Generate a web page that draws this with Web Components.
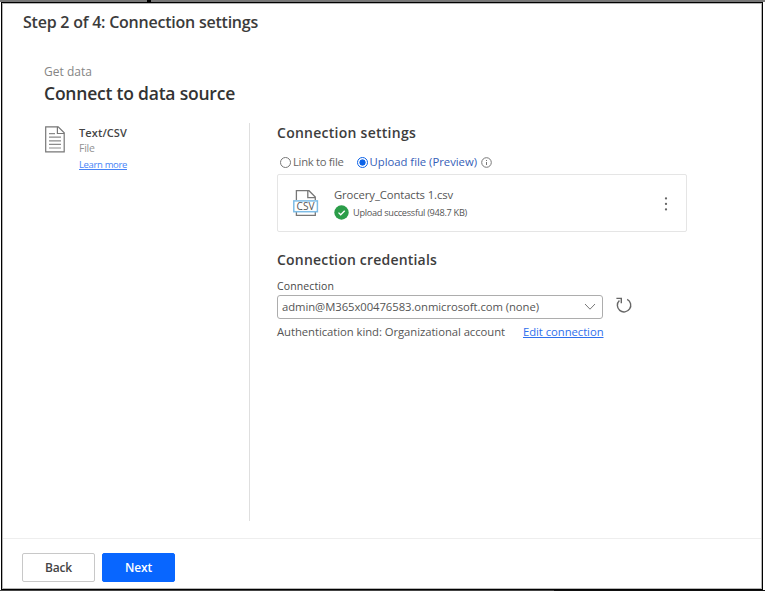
<!DOCTYPE html>
<html lang="en"><head><meta charset="utf-8"><title>Connection settings</title>
<style>
html,body{margin:0;width:765px;height:591px;overflow:hidden;background:#fff;font-family:"Open Sans","Noto Sans",sans-serif;color:#333}
</style></head><body>
<wizard-page></wizard-page>
<script>
// A single line of text, tracked so that it occupies the width given in "w".
customElements.define('text-line', class extends HTMLElement{
  constructor(){super();this.attachShadow({mode:'open'}).innerHTML='<style>:host{display:block;white-space:nowrap;line-height:1;width:max-content}span{display:inline-block}:host([link]) span{text-decoration:underline;text-decoration-thickness:1px;text-underline-offset:1px}</style><span><slot></slot></span>';}
  connectedCallback(){
    const s=this.shadowRoot.querySelector('span'),w=+this.getAttribute('w');
    if(!w)return;
    const n=this.textContent.length,d=(w-s.getBoundingClientRect().width)/n;
    s.style.letterSpacing=d.toFixed(3)+'px';
  }
});
function define(name,html){
  customElements.define(name,class extends HTMLElement{
    constructor(){super();const t=document.createElement('template');t.innerHTML=html;this.attachShadow({mode:'open'}).append(document.importNode(t.content,true));}
  });
}
define('file-icon',`<style>:host{display:block;width:20px;height:27px}svg{display:block}</style>
<svg width="20" height="27" viewBox="0 0 20 27" fill="none" stroke="#777" stroke-width="1.2"><path d="M.7.8H13.2L19.2 6.8V25.8H.7Z"/><path d="M12.4.8V7.5H19.2"/><path d="M4 7.6H10M4 11.2H16M4 14.8H16M4 18.4H16M4 22H16" stroke="#8b8b8b"/></svg>`);
define('csv-icon',`<style>:host{display:block;width:26px;height:28px}svg{display:block;font:10.5px "Open Sans",sans-serif}</style>
<svg width="26" height="28" viewBox="0 0 26 28"><path d="M3.4 11V1.7H16L22.3 8V11M14.8 1.7V8.7H22.3M3.4 23V26.4H22.3V23" fill="none" stroke="#777" stroke-width="1.3"/><rect x="0.8" y="11.9" width="23.6" height="10.8" fill="#fff" stroke="#7dbce6" stroke-width="1.5"/><text x="12.6" y="21.1" text-anchor="middle" fill="#555" textLength="18" lengthAdjust="spacingAndGlyphs">CSV</text></svg>`);
define('radio-option',`<style>:host{display:flex;align-items:center;height:14px;font-size:11.3px;color:#666}
i{box-sizing:border-box;width:11px;height:11px;border:1px solid #777;border-radius:50%;margin-right:2px;flex:none}
:host([checked]){color:#3560b8}:host([checked]) i{border-color:#0b62e8;background:radial-gradient(circle,#0b62e8 0 2.8px,#fff 3.4px)}</style><i></i><slot></slot>`);
define('push-button',`<style>:host{box-sizing:border-box;width:73px;height:29px;display:flex;align-items:center;justify-content:center;border:1.5px solid #c8c8c8;border-radius:2px;font-size:12px;font-weight:600;color:#444;background:#fff}
:host([primary]){background:#0866ff;border-color:#0866ff;color:#fff}</style><slot></slot>`);
define('source-panel',`<style>:host{box-sizing:border-box;display:flex;width:206px;height:398px;border-right:1px solid #dfdfdf;padding-top:4px}
file-icon{margin:-1px 14px 0 1px}text-line{height:16px;font-size:10px}</style>
<file-icon></file-icon><div><text-line w="48" style="font-size:11px;font-weight:600;color:#444">Text/CSV</text-line>
<text-line w="15.5" style="color:#929292;font-size:10.5px">File</text-line><text-line link w="48" style="color:#4684f7;font-size:9.5px;margin-top:1px">Learn more</text-line></div>`);
define('file-card',`<style>:host{box-sizing:border-box;display:flex;width:410px;height:58px;border:1.5px solid #e5e5e5;border-radius:2px;padding:14px 17px 0 15px}
csv-icon{margin-right:15px}.info{flex:1}.row{display:flex;align-items:center;gap:4px;height:15px;margin-top:4px}.row text-line{font-size:9.2px;color:#555}.menu{margin:6.5px 0 0}svg{display:block}</style>
<csv-icon></csv-icon><div class="info"><text-line w="119" style="font-size:11.3px;color:#555;height:12px;line-height:11px">Grocery_Contacts 1.csv</text-line>
<div class="row"><svg width="15" height="15" viewBox="0 0 15 15"><circle cx="7.5" cy="7.5" r="7.2" fill="#2b9d49"/><path d="M4.5 7.6 6.7 9.8 10.7 5.8" fill="none" stroke="#fff" stroke-width="1.3"/></svg><text-line w="114">Upload successful (948.7 KB)</text-line></div></div>
<svg class="menu" width="6" height="16" fill="#666"><circle cx="3" cy="2.4" r="1.15"/><circle cx="3" cy="7.9" r="1.15"/><circle cx="3" cy="13.4" r="1.15"/></svg>`);
define('select-box',`<style>:host{box-sizing:border-box;width:326px;height:24px;border:1.3px solid #adadad;border-radius:3px;display:flex;align-items:center;justify-content:space-between;padding:0 6px 1px 4px;font-size:11.3px;color:#555}</style>
<slot></slot><svg width="12" height="8" fill="none" stroke="#777"><path d="M1 1 6 6.2 11 1"/></svg>`);
define('settings-panel',`<style>:host{display:block;padding:3px 0 0 27px}h2{margin:0;font-size:14px;font-weight:600;height:14px;color:#3d3d3d}.row{display:flex;align-items:center}svg{display:block}
.radios{margin:15px 0 0 3px;height:14px}.conn{margin-top:3px}file-card{margin-top:5px}</style>
<h2><text-line w="139">Connection settings</text-line></h2>
<div class="row radios"><radio-option><text-line w="50.5">Link to file</text-line></radio-option><radio-option checked style="margin-left:13px"><text-line w="107.5">Upload file (Preview)</text-line></radio-option>
<svg style="margin-left:4px" width="11" height="11" fill="none" stroke="#777"><circle cx="5.5" cy="5.5" r="4.8"/><path d="M5.5 5V8M5.5 3V4"/></svg></div>
<file-card></file-card><h2 style="margin-top:21px"><text-line w="160">Connection credentials</text-line></h2>
<text-line w="57" style="font-size:10.5px;font-weight:500;color:#484848;margin-top:14px;height:11px">Connection</text-line>
<div class="row conn" style="height:24px"><select-box><text-line w="257">admin@M365x00476583.onmicrosoft.com (none)</text-line></select-box>
<svg style="margin:-4px 0 0 12px" width="18" height="18" fill="none" stroke="#666" stroke-width="1.4"><path d="M12.2 3.3A6.7 6.7 0 1 1 4.4 4.4M1.4 2.4H6.3V7.2"/></svg></div>
<div class="row" style="font-size:11.3px;margin-top:7px;color:#555"><text-line w="228">Authentication kind: Organizational account</text-line><text-line link w="80.5" style="margin-left:18px;color:#2f70ed">Edit connection</text-line></div>`);
define('wizard-page',`<style>:host{box-sizing:border-box;display:flex;width:765px;height:591px;flex-direction:column;background:linear-gradient(#000,#000) 147px 0/4px 2px no-repeat,linear-gradient(#777,#777) 0 0/765px 2px no-repeat,linear-gradient(90deg,#444 554px,#111 554px) 0 590px/765px 1px no-repeat,#fff;padding:2px 2px 1px 1px}
.frame{box-sizing:border-box;height:588px;border:1px solid #000;box-shadow:inset 0 0 0 1px #b5b5b5;display:flex;flex-direction:column}
header{padding:11px 0 0 21px;height:36px;box-sizing:border-box}main{height:486px;padding:27px 0 0 42px;box-sizing:border-box}
.body{display:flex;margin-top:20px}footer{margin:13px 1px 0;border-top:1px solid #eee;display:flex;gap:7px;padding:14px 0 0 19px}</style>
<div class="frame"><header><text-line w="235" style="font-size:16px;font-weight:600;color:#3b3b3b">Step 2 of 4: Connection settings</text-line></header>
<main><text-line w="48" style="font-size:12px;color:#858585;height:17px">Get data</text-line><text-line w="191" style="font-size:17.5px;font-weight:600;color:#333;margin-top:2px;height:18px">Connect to data source</text-line>
<div class="body"><source-panel></source-panel><settings-panel></settings-panel></div></main>
<footer><push-button><text-line w="27">Back</text-line></push-button><push-button primary><text-line w="27">Next</text-line></push-button></footer></div>`);
</script></body></html>
